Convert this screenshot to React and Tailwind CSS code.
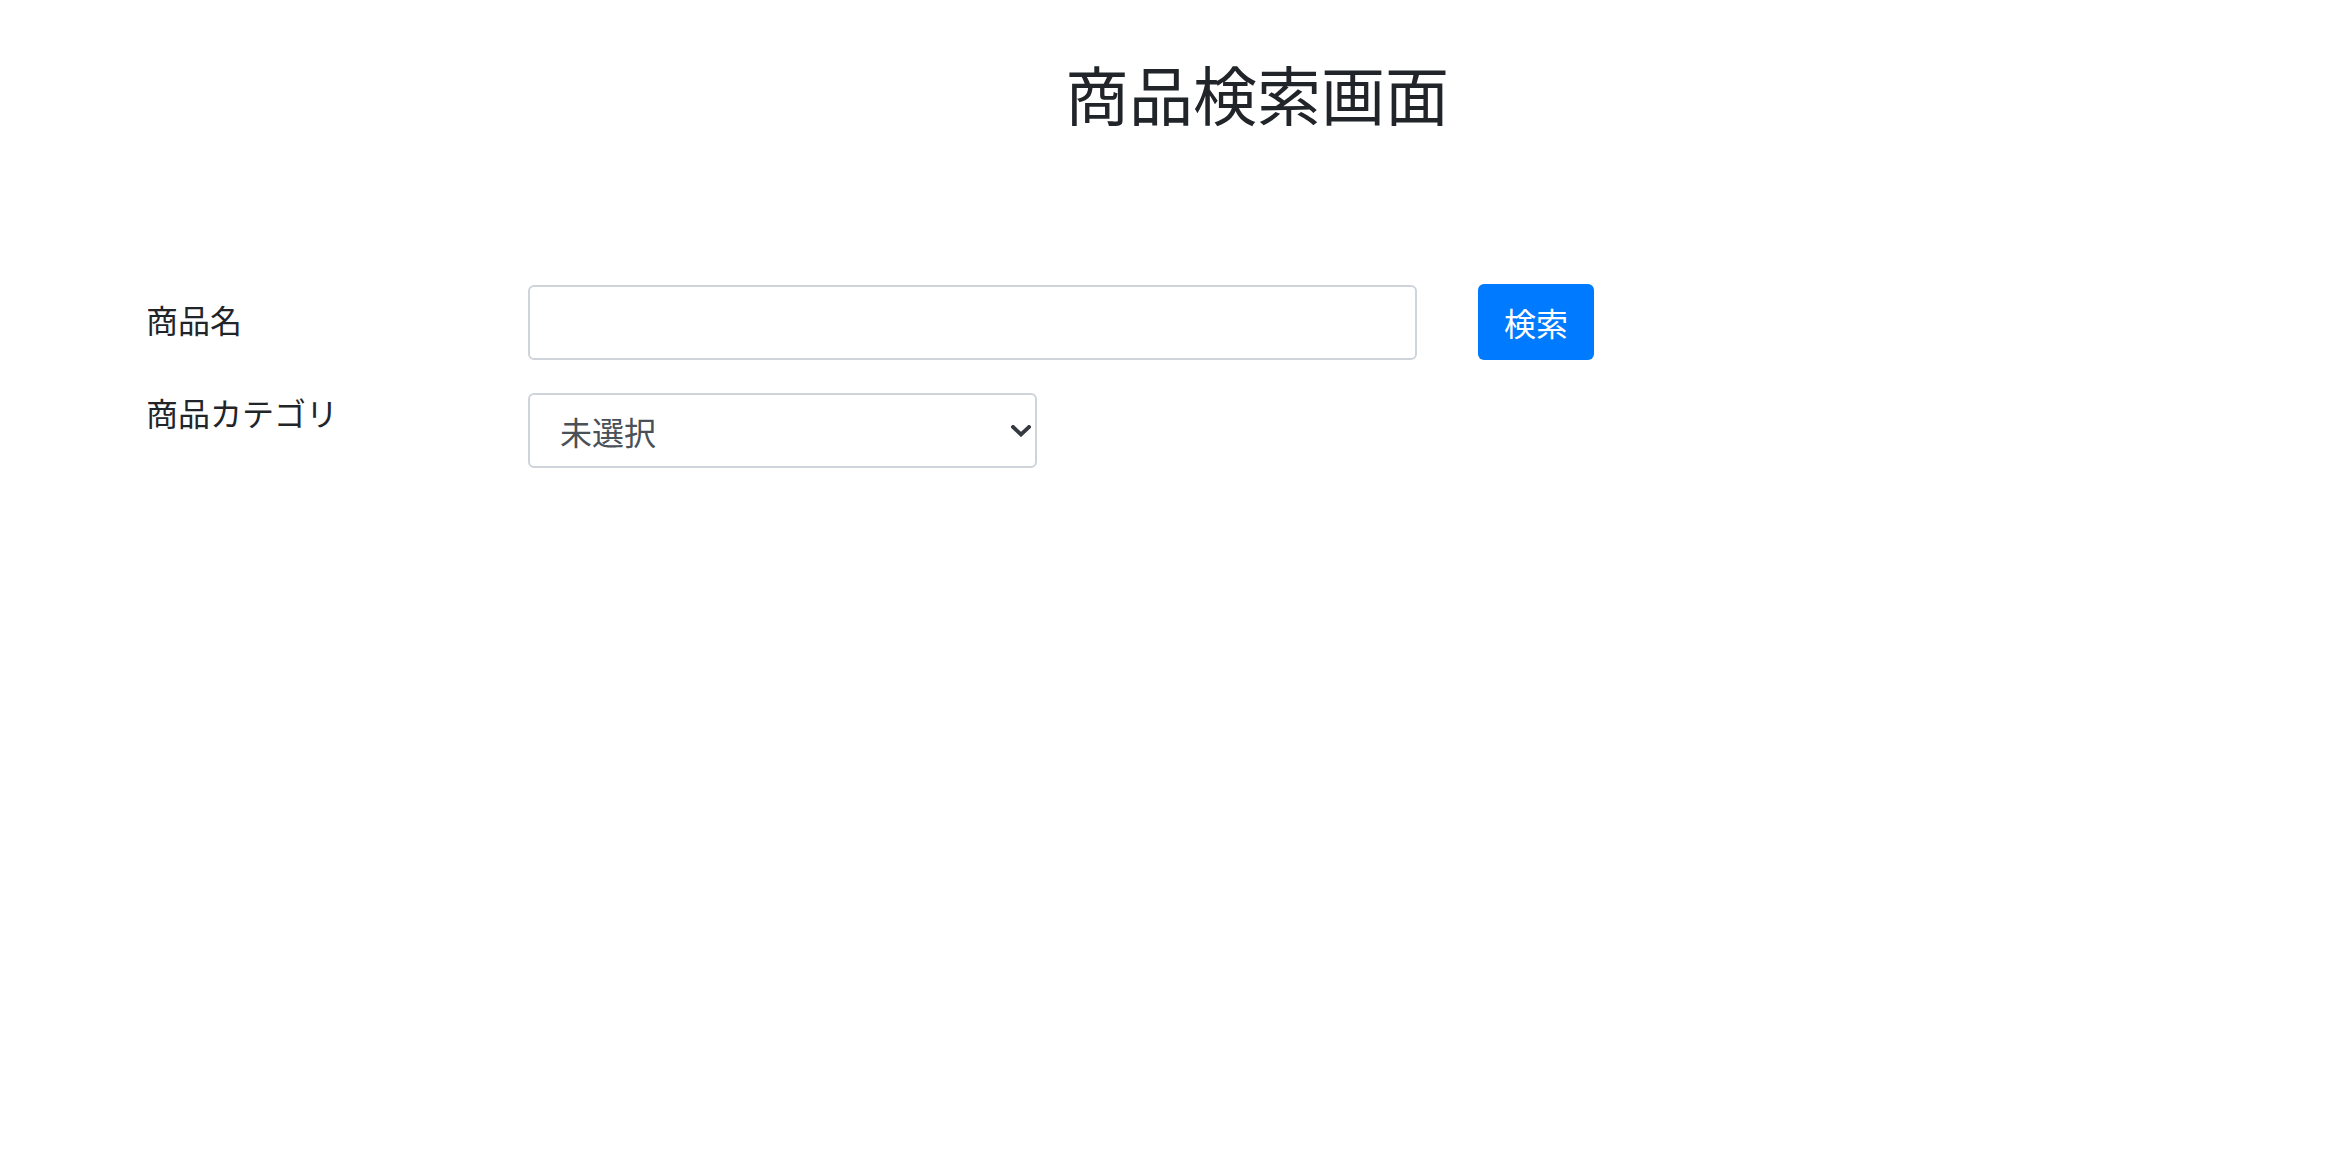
import React from "react";

const font = { fontFamily: '"Noto Sans CJK JP", "Noto Sans", sans-serif' };

export default function App() {
  return (
    <div className="min-h-[1150px] w-full bg-white text-[#212529]" style={font}>
      <h1 className="ml-[170px] pt-[52px] text-center text-[64px] leading-[80px] font-normal text-[#212529]">
        商品検索画面
      </h1>
      <div className="mt-[152px] flex flex-col gap-[33px] pl-[146px]">
        <div className="flex items-center">
          <label className="mb-[6px] w-[382px] text-[32px] leading-[46px]">商品名</label>
          <input
            type="text"
            className="h-[75px] w-[889px] rounded-[6px] border-2 border-[#ced4da] bg-white px-[18px] text-[32px] text-[#495057] outline-none"
          />
          <button className="ml-[61px] h-[76px] w-[116px] rounded-[6px] bg-[#007bff] text-[32px] leading-[46px] text-white">
            検索
          </button>
        </div>
        <div className="flex items-start">
          <label className="-mt-[4px] w-[382px] text-[32px] leading-[46px]">商品カテゴリ</label>
          <div className="relative w-[509px]">
            <select className="h-[75px] w-full appearance-none rounded-[6px] border-2 border-[#ced4da] bg-white pl-[30px] pr-[50px] text-[32px] text-[#495057] outline-none">
              <option>未選択</option>
            </select>
            <svg
              className="pointer-events-none absolute right-[6px] top-[32px]"
              width="20"
              height="12"
              viewBox="0 0 20 12"
            >
              <path d="M2 2 L10 9.5 L18 2" fill="none" stroke="#343a40" strokeWidth="3.8" strokeLinecap="square" />
            </svg>
          </div>
        </div>
      </div>
    </div>
  );
}
